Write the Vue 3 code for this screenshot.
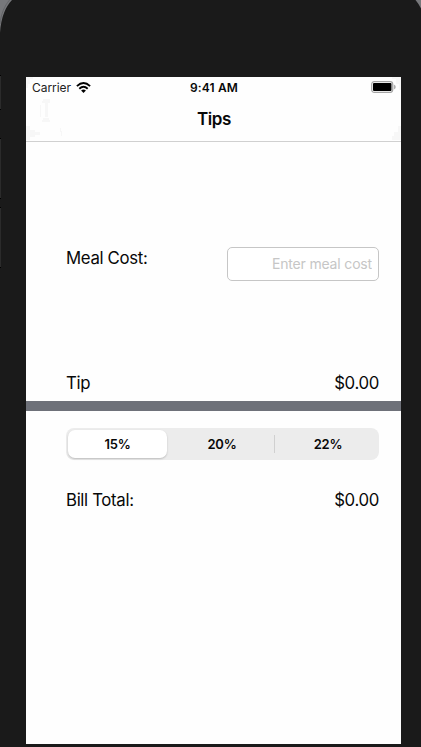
<script setup>
import { ref } from 'vue'

const rates = ['15%', '20%', '22%']
const selected = ref(0)
const cost = ref('')
</script>

<template>
  <div class="phone">
    <svg class="shell" width="421" height="280" viewBox="0 0 421 280" aria-hidden="true">
      <path d="M0 0H12C6 6 1 17 0 33Z" fill="#77787b" />
      <path d="M9.5 0C4.500 6 1 14 0 24" fill="none" stroke="#636467" stroke-width="1" />
      <path d="M415.500 0H421V8.500Q418.500 3.500 415.500 0Z" fill="#77787b" />
      <g fill="#2b2b2b">
        <rect x="0" y="76" width="1" height="33" />
        <rect x="0" y="139" width="1" height="59" />
        <rect x="0" y="208" width="1" height="59" />
      </g>
      <g fill="#000">
        <rect x="0" y="75" width="1" height="1" />
        <rect x="0" y="109" width="1" height="1" />
        <rect x="0" y="138" width="1" height="1" />
        <rect x="0" y="198" width="1" height="1" />
        <rect x="0" y="207" width="1" height="1" />
        <rect x="0" y="267" width="1" height="1" />
      </g>
    </svg>
    <main class="screen">
      <header class="top">
        <svg class="haze" width="375" height="64" viewBox="0 0 375 64" aria-hidden="true">
          <path d="M0 0H7V2H4V7H2V11H0ZM17 22H24V26H22V28H19V26H16V24H17ZM14 28H15V40H14ZM19 28H22V40H19ZM17 41H23V43H24V45H16V43H17ZM0 49H4V53H9V55H14V58H9V60H4V63H0ZM34 51H35V54H36V59H35V55H34ZM366 0H375V13H373V7H370V2H366ZM375 49H372V55H368V59H366V63H375Z" fill="#f7f7f7" />
        </svg>
        <div class="status">
          <div class="carrier">
            <span>Carrier</span>
            <svg width="15" height="11" viewBox="0 0 15 11" aria-hidden="true">
              <g fill="none" stroke="#000" stroke-width="1.900">
                <path d="M.9 4.100Q7.500 -1.900 14.100 4.100" />
                <path d="M3.300 6.700Q7.500 2.900 11.700 6.700" />
              </g>
              <path d="M5.100 8.400Q7.500 6.500 9.900 8.400L7.500 10.900Z" />
            </svg>
          </div>
          <span class="time">9:41 AM</span>
          <svg class="battery" width="25" height="12" viewBox="0 0 25 12" aria-hidden="true">
            <rect x=".7" y=".7" width="21" height="10.600" rx="2.500" fill="#fff" stroke="#a5a5a5" stroke-width="1.200" />
            <rect x="2" y="2" width="18.500" height="8" rx="1" />
            <path d="M22.800 3.500Q24.800 4.300 24.800 6T22.800 8.500Z" fill="#b0b0b0" />
          </svg>
        </div>
        <h1>Tips</h1>
      </header>
      <section class="row cost">
        <label for="cost">Meal Cost:</label>
        <input id="cost" v-model="cost" placeholder="Enter meal cost" />
      </section>
      <section class="row tip">
        <span>Tip</span>
        <span class="amount">$0.00</span>
      </section>
      <div class="divider"></div>
      <div class="segments">
        <button
          v-for="(rate, i) in rates"
          :key="rate"
          :class="{ active: i === selected, split: i > 0 && i - 1 !== selected && i !== selected }"
          @click="selected = i"
        >{{ rate }}</button>
      </div>
      <section class="row total">
        <span>Bill Total:</span>
        <span class="amount">$0.00</span>
      </section>
    </main>
  </div>
</template>

<style>
body {
  margin: 0;
  background: #1a1a1a;
}
</style>

<style scoped>
.phone {
  position: relative;
  box-sizing: border-box;
  width: 421px;
  height: 747px;
  padding: 77px 20px 3px 26px;
  overflow: hidden;
  background: #1a1a1a;
  color: #080808;
  font-family: Inter, "Liberation Sans", sans-serif;
}
.shell {
  position: absolute;
  top: 0;
  left: 0;
}
.screen {
  height: 667px;
  background: #fefefe;
}
.top {
  position: relative;
  height: 64px;
  border-bottom: 1px solid #d0d0d0;
}
.haze {
  position: absolute;
  top: 0;
  left: 0;
}
.status {
  position: relative;
  display: grid;
  grid-template-columns: 1fr auto 1fr;
  align-items: center;
  height: 20px;
  padding: 0 5px 0 6px;
  font-size: 12px;
}
.carrier {
  display: flex;
  align-items: center;
  gap: 5px;
  color: #222;
  letter-spacing: -0.05px;
}
.time {
  font-weight: 600;
  letter-spacing: 0.15px;
}
.battery {
  justify-self: end;
}
h1 {
  position: relative;
  margin: 0;
  padding-left: 1px;
  font-size: 17px;
  font-weight: 600;
  line-height: 45px;
  text-align: center;
  letter-spacing: -0.35px;
}
.row {
  display: flex;
  justify-content: space-between;
  padding: 0 22px 0 40px;
  font-size: 16.8px;
  line-height: 20px;
  letter-spacing: -0.34px;
}
.cost {
  padding-top: 105px;
}
.cost label {
  padding-top: 1px;
}
input {
  box-sizing: border-box;
  width: 152px;
  height: 34px;
  padding: 0 6px 2px;
  border: 1px solid #c6c6c6;
  border-radius: 5px;
  outline: 0;
  background: #fff;
  font: 14px Inter, "Liberation Sans", sans-serif;
  letter-spacing: -0.17px;
  text-align: right;
}
input::placeholder {
  color: #c6c6c6;
  opacity: 1;
}
.tip {
  height: 28px;
  padding-top: 92px;
}
.divider {
  height: 10px;
  background: #6e7179;
}
.segments {
  display: grid;
  grid-template-columns: 103px 106px 104px;
  box-sizing: border-box;
  height: 32px;
  margin: 17px 22px 0 40px;
  border-radius: 8px;
  background: #ececec;
}
button {
  position: relative;
  padding: 0;
  border: 0;
  background: none;
  color: #080808;
  font: 600 13px Inter, "Liberation Sans", sans-serif;
  letter-spacing: -0.25px;
}
button:last-child {
  padding-left: 2px;
}
.active {
  margin: 2px;
  border-radius: 7px;
  background: #fff;
  box-shadow: 0 1px 2px #0003;
}
.split::before {
  content: "";
  position: absolute;
  top: 7px;
  left: -1px;
  width: 1px;
  height: 18px;
  background: #d0d0d0;
}
.total {
  padding-top: 30px;
}
</style>
